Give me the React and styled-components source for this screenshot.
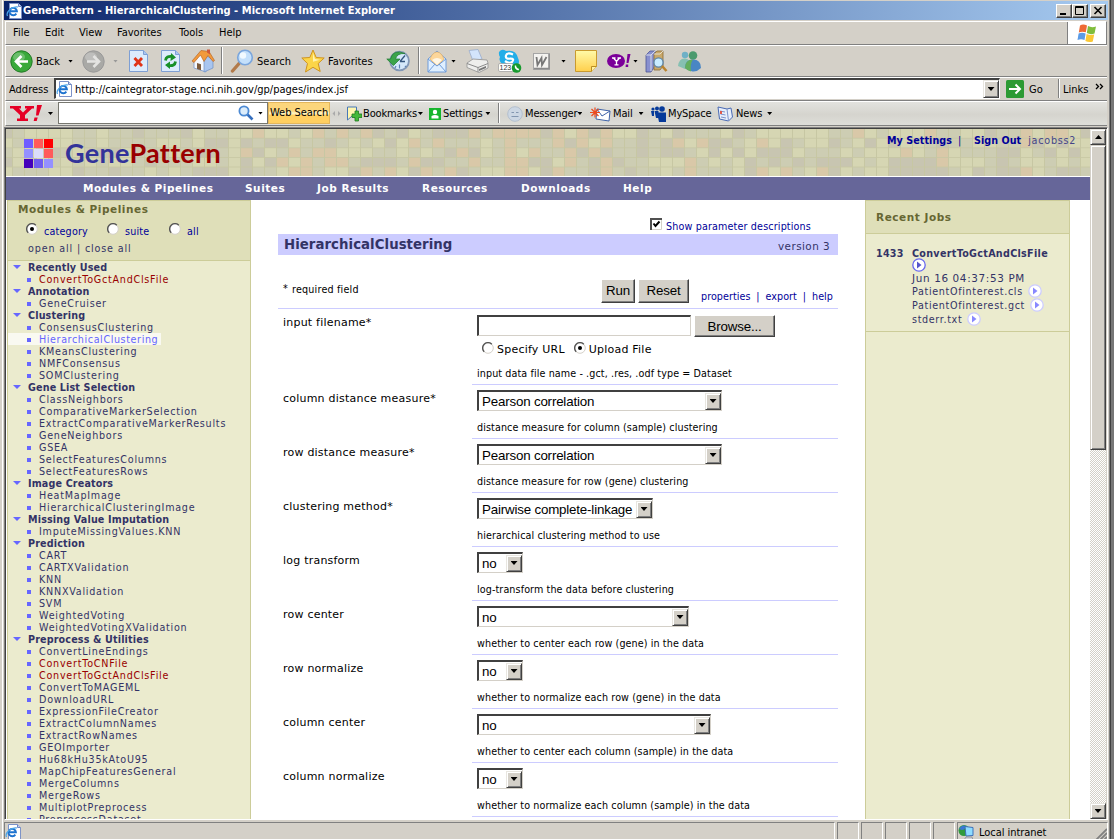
import React from "react";
import styled, { createGlobalStyle } from "styled-components";

const VERDANA = '"DejaVu Sans", Verdana, sans-serif';
const TAHOMA = '"DejaVu Sans Condensed", "DejaVu Sans", Tahoma, sans-serif';
const FACE = "#d4d0c8";
const INK = "#333366";
const LINK = "#000099";

const Global = createGlobalStyle`
  * { box-sizing: border-box; }
  body { margin: 0; overflow: hidden; background: ${FACE}; }
`;

/* ---------- window frame ---------- */
const Window = styled.div`
  width: 1114px;
  height: 839px;
  display: flex;
  overflow: hidden;
  background: ${FACE};
  font-family: ${TAHOMA};
  font-stretch: condensed;
  font-size: 11px;
  color: #000;
  white-space: nowrap;
`;
const LeftFrame = styled.div`
  width: 4px;
  border-left: 2px solid ${FACE};
  background: linear-gradient(90deg, #fff 0 1px, ${FACE} 1px);
`;
const RightFrame = styled.div`
  width: 6px;
  background: linear-gradient(90deg, ${FACE} 0 1px, #808080 1px 2px, #404040 2px 3px, #777 3px);
`;
const Column = styled.div`
  width: 1104px;
  display: flex;
  flex-direction: column;
`;
const TitleBar = styled.div`
  height: 19px;
  margin-top: 1px;
  flex: none;
  display: flex;
  align-items: center;
  padding: 0 2px;
  background: linear-gradient(90deg, #0a246a, #a6caf0);
  color: #fff;
  font-weight: bold;
`;
const TitleText = styled.span`
  flex: 1;
  margin-left: 1px;
  letter-spacing: 0.05px;
`;
const CaptionButton = styled.div`
  width: 16px;
  height: 14px;
  margin-left: ${(p) => p.$gap || 0}px;
  background: ${FACE};
  border: 1px solid;
  border-color: #fff #404040 #404040 #fff;
  box-shadow: inset -1px -1px #808080;
  display: flex;
`;
const Band = styled.div`
  height: ${(p) => p.$h}px;
  flex: none;
  display: flex;
  align-items: stretch;
  border-top: 1px solid #fff;
  border-bottom: 1px solid #808080;
  border-left: 1px solid #fff;
  margin: 0 1px;
`;
const MenuBand = styled(Band)`
  margin-top: 1px;
  border-right: 1px solid #808080;
`;
const MenuItem = styled.span`
  width: ${(p) => p.$w}px;
  padding-top: 4px;
  padding-left: 7px;
`;
const Throbber = styled.div`
  width: 39px;
  margin-left: auto;
  background: #fff;
  border-left: 1px solid #808080;
  display: flex;
  align-items: center;
  justify-content: center;
`;
const Tool = styled.div`
  width: ${(p) => p.$w}px;
  flex: none;
  display: flex;
  align-items: center;
  padding-left: ${(p) => p.$pl || 0}px;
  gap: ${(p) => p.$gap ?? 4}px;
`;
const Divider = styled.div`
  width: 2px;
  flex: none;
  margin: 1px ${(p) => p.$r || 7}px 2px 0;
  border-left: 1px solid #808080;
  border-right: 1px solid #fff;
`;
const Caret = styled.i`
  width: 5px;
  height: 3px;
  flex: none;
  margin-left: ${(p) => p.$ml || 0}px;
  background: ${(p) => p.$c || "#000"};
  clip-path: polygon(0 0, 100% 0, 50% 100%);
`;
const AddressLabel = styled.span`
  width: 48px;
  padding: 5px 0 0 3px;
`;
const AddressField = styled.div`
  width: 946px;
  height: 21px;
  display: flex;
  align-items: center;
  background: #fff;
  border: 1px solid #404040;
  border-width: 2px 1px 1px 2px;
  border-color: #404040 #fff #fff #404040;
`;
const Url = styled.span`
  flex: 1;
  margin-left: 3px;
  letter-spacing: 0;
`;
const DropButton = styled.div`
  width: 16px;
  height: ${(p) => p.$h || 17}px;
  flex: none;
  background: ${FACE};
  border: 1px solid;
  border-color: #e8e6e0 #404040 #404040 #e8e6e0;
  box-shadow: inset 1px 1px #fff, inset -1px -1px #808080;
  display: flex;
  align-items: center;
  justify-content: center;
  &::after {
    content: "";
    width: 7px;
    height: 4px;
    background: #000;
    clip-path: polygon(0 0, 100% 0, 50% 100%);
    transform: rotate(${(p) => (p.$up ? 180 : 0)}deg);
  }
`;
const YahooBand = styled(Band)`
  background: linear-gradient(#e2e2de, #d5d4ce 55%, #deded9);
  letter-spacing: -0.15px;
`;
const YahooInput = styled.div`
  width: 210px;
  height: 22px;
  flex: none;
  display: flex;
  align-items: center;
  justify-content: flex-end;
  gap: 4px;
  padding-right: 4px;
  background: #fff;
  border: 1px solid #77776f;
`;
const WebSearch = styled.div`
  width: 62px;
  height: 22px;
  flex: none;
  padding: 3px 0 0 1px;
  margin-right: 2px;
  letter-spacing: -0.05px;
  background: linear-gradient(#fcd67c 0 40%, #fff0b8 48% 54%, #ffcf60 62%);
  border: 1px solid #e3b65c;
`;

/* ---------- document viewport ---------- */
const Viewport = styled.div`
  height: 693px;
  flex: none;
  display: flex;
  border: 1px solid;
  border-color: #808080 #fff #fff #808080;
  box-shadow: inset 1px 1px #404040;
  padding: 1px 0 0 1px;
  margin-top: 1px;
  font-family: ${VERDANA};
  font-stretch: normal;
  font-size: 9.6px;
  color: ${INK};
`;
const Page = styled.div`
  width: 1084px;
  flex: none;
  background: #fff;
  display: flex;
  flex-direction: column;
  overflow: hidden;
`;
const Banner = styled.header`
  height: 47px;
  flex: none;
  display: grid;
  background: #cdcdb0;
  > * { grid-area: 1 / 1; }
`;
const BannerContent = styled.div`
  display: flex;
  padding-left: 18px;
  position: relative;
`;
const Brand = styled.div`
  margin: 6px 0 0 12px;
  font: 700 27px/36px Lato, sans-serif;
  color: #333399;
  letter-spacing: 0.3px;
  flex: 1;
  span { color: #990000; }
`;
const UserLinks = styled.div`
  width: 203px;
  padding-top: 6px;
  display: flex;
  color: ${LINK};
  b { letter-spacing: 0.05px; }
`;
const Pipe = styled.span`
  width: 22px;
  padding-left: 6px;
`;
const UserName = styled.span`
  margin-left: 7px;
  letter-spacing: 0.75px;
  color: #444488;
`;
const Nav = styled.nav`
  height: 24px;
  flex: none;
  border-top: 1px solid #fff;
  background: #666699;
  display: flex;
  padding: 5px 0 0 77px;
  font-size: 10.5px;
  font-weight: bold;
  letter-spacing: 0.55px;
  color: #fff;
`;
const NavItem = styled.span`
  width: ${(p) => p.$w}px;
`;
const Body = styled.div`
  flex: 1;
  min-height: 0;
  display: flex;
  padding-left: 1px;
`;
const Panel = styled.aside`
  width: ${(p) => p.$w}px;
  flex: none;
  background: #ebebce;
  border: 1px solid #cccc99;
  border-bottom: 0;
  overflow: hidden;
`;
const PanelHead = styled.div`
  height: ${(p) => p.$h}px;
  padding: ${(p) => p.$pad};
  background: #dfdfb9;
  border-bottom: 1px solid #cccc99;
`;
const PanelTitle = styled.div`
  font-size: 10.5px;
  line-height: 14px;
  font-weight: bold;
  letter-spacing: 0.55px;
  color: #666633;
`;
const RadioRow = styled.div`
  display: flex;
  padding: 7px 0 0 8px;
  height: 27px;
`;
const RadioOption = styled.label`
  width: ${(p) => p.$w}px;
  display: flex;
  gap: 6px;
  color: ${LINK};
  letter-spacing: 0.2px;
  span { padding-top: 3px; }
`;
const OpenClose = styled.div`
  padding-left: 10px;
  letter-spacing: 0.85px;
  line-height: 12px;
`;
const Category = styled.div`
  height: 12px;
  line-height: 13px;
  font-weight: bold;
  letter-spacing: 0.15px;
  display: flex;
  align-items: center;
  padding-left: 5px;
  gap: 7px;
  &::before {
    content: "";
    width: 8px;
    height: 4px;
    background: #6666ff;
    clip-path: polygon(0 0, 100% 0, 50% 100%);
  }
`;
const Module = styled.div`
  height: 12px;
  line-height: 13px;
  width: max-content;
  letter-spacing: ${(p) => (p.$state === "current" ? 0.6 : 0.75)}px;
  display: flex;
  align-items: center;
  padding: 0 3px 0 19px;
  gap: 8px;
  color: ${(p) => (p.$state === "red" ? "#990000" : p.$state === "current" ? "#6666ff" : INK)};
  background: ${(p) => (p.$state === "current" ? "#f9f9f1" : "none")};
  &::before {
    content: "";
    width: 4px;
    height: 4px;
    margin-top: 2px;
    background: #6666ff;
  }
`;
const Main = styled.main`
  width: 614px;
  flex: none;
  padding: 17px 27px 0;
  color: #000;
`;
const ShowDescriptions = styled.div`
  height: 17px;
  display: flex;
  justify-content: flex-end;
  gap: 4px;
  padding: 1px 27px 0 0;
  color: ${LINK};
  letter-spacing: 0.15px;
  span { padding-top: 3px; }
`;
const TaskTitle = styled.div`
  height: 21px;
  display: flex;
  align-items: center;
  justify-content: space-between;
  padding: 0 8px 0 6px;
  background: #ccccff;
  color: ${INK};
`;
const TaskName = styled.h1`
  margin: 0;
  font-size: 13.3px;
  font-weight: bold;
  letter-spacing: 0.05px;
`;
const Version = styled.span`
  font-size: 10.4px;
  letter-spacing: 0.45px;
  padding-top: 3px;
`;
const Actions = styled.div`
  height: 54px;
  display: flex;
  align-items: center;
  padding: 18px 5px 0 5px;
  border-bottom: 1px solid #ccccff;
`;
const Required = styled.span`
  width: 318px;
  margin-top: -3px;
  display: flex;
  gap: 4px;
  letter-spacing: 0.2px;
  span { padding-top: 1px; }
`;
const Button = styled.button`
  width: ${(p) => p.$w}px;
  height: ${(p) => p.$h}px;
  flex: none;
  padding: 0;
  margin-right: 3px;
  font: 13.33px "Liberation Sans", Arial, sans-serif;
  letter-spacing: -0.15px;
  background: ${FACE};
  border: 1px solid;
  border-color: #fff #404040 #404040 #fff;
  box-shadow: inset -1px -1px #808080;
  color: #000;
`;
const ActionLinks = styled.div`
  flex: 1;
  display: flex;
  justify-content: space-between;
  padding: 11px 0 0 9px;
  color: ${LINK};
  letter-spacing: 0.05px;
`;
const Row = styled.div`
  height: ${(p) => p.$h || 54}px;
  display: flex;
`;
const Label = styled.label`
  width: 194px;
  padding: 7px 0 0 5px;
  font-size: 11px;
  letter-spacing: 0.22px;
`;
const Control = styled.div`
  width: 366px;
  display: flex;
  flex-direction: column;
  justify-content: space-between;
  align-items: flex-start;
  padding: ${(p) => (p.$first ? 6 : 5)}px 0 4px 5px;
  border-bottom: 1px solid #ccccff;
`;
const Description = styled.span`
  letter-spacing: 0.1px;
  line-height: 12px;
`;
const SelectBox = styled.div`
  width: ${(p) => p.$w}px;
  height: 21px;
  display: flex;
  align-items: center;
  background: #fff;
  border: 2px solid;
  border-width: 2px 1px 1px 2px;
  border-color: #404040 ${FACE} ${FACE} #404040;
  font: 13.33px "Liberation Sans", Arial, sans-serif;
  padding: 0 0 0 3px;
  span { flex: 1; letter-spacing: -0.18px; padding-top: 1px; }
`;
const FileRow = styled.div`
  display: flex;
  gap: 3px;
`;
const FileInput = styled.div`
  width: 214px;
  height: 21px;
  border: 2px solid;
  border-width: 2px 1px 1px 2px;
  border-color: #404040 ${FACE} ${FACE} #404040;
`;
const SourceRow = styled.div`
  display: flex;
  padding-left: 5px;
  margin-bottom: 7px;
  gap: 9px;
  font-size: 11px;
  letter-spacing: 0.22px;
  label { display: flex; gap: 3px; }
  span { padding-top: 1px; }
`;
const Job = styled.div`
  height: 98px;
  padding: 14px 0 0 10px;
  display: flex;
  border-bottom: 1px solid #cccc99;
`;
const JobId = styled.b`
  width: 36px;
  letter-spacing: 0.25px;
`;
const JobLine = styled.div`
  height: ${(p) => p.$h || 14}px;
  display: flex;
  align-items: center;
  gap: 5px;
  letter-spacing: ${(p) => p.$ls || 0.65}px;
  font-size: ${(p) => p.$size || 9.6}px;
  font-weight: ${(p) => (p.$bold ? "bold" : "normal")};
`;
const ScrollBar = styled.div`
  width: 16px;
  flex: none;
  display: flex;
  flex-direction: column;
  justify-content: space-between;
  background: repeating-conic-gradient(#fff 0 25%, ${FACE} 0 50%) 0 0 / 2px 2px;
`;
const Thumb = styled.div`
  height: 305px;
  background: ${FACE};
  border: 1px solid;
  border-color: ${FACE} #404040 #404040 ${FACE};
  box-shadow: inset 1px 1px #fff, inset -1px -1px #808080;
`;
const StatusBar = styled.footer`
  flex: 1;
  margin-top: 2px;
  display: flex;
  gap: 2px;
`;
const StatusCell = styled.div`
  width: ${(p) => p.$w}px;
  flex: none;
  border: 1px solid;
  border-color: #808080 #fff transparent #808080;
  display: flex;
  align-items: center;
  gap: 5px;
  padding-top: 1px;
  letter-spacing: -0.05px;
`;
const Spacer = styled.div`
  flex: 1;
`;

/* ---------- drawings ---------- */
const Drawing = styled.svg`
  flex: none;
`;
const Svg = ({ w, h, vb, children }) => (
  <Drawing width={w} height={h} viewBox={vb || `0 0 ${w} ${h}`}>
    {children}
  </Drawing>
);
const IEPage = () => (
  <Svg w={16} h={16}>
    <path d="M3.500.5h9l3 3v12h-12z" fill="#fff" stroke="#7d93c8" />
    <path d="M12.500.5v3h3" fill="#c6d4f2" stroke="#6d86c4" />
    <path d="M10.300 10.600a3.700 3.700 0 1 1 .6-2.400H4.200" fill="none" stroke="#1e73cf" strokeWidth="1.900" />
    <path d="M1.500 13C-.5 9 6 3 12 4" fill="none" stroke="#49a4e8" strokeWidth="1.200" />
  </Svg>
);
const Flag = () => (
  <Svg w={20} h={19}>
    <path d="M3 1.500q3-2 7 0L8.800 8.300Q5 7 1.800 8.500z" fill="#ee6a34" />
    <path d="M11 2q3.500 2 8 .5L17.500 9.500Q13.500 11 9.800 9z" fill="#80bd3c" />
    <path d="M1.600 9.500q3.400-1.700 7 0L7.500 16Q4 14.500.5 16z" fill="#5b9be6" />
    <path d="M9.600 10q4 1.500 7.600.5L15.800 17.500Q12 18.800 8.400 17z" fill="#fbc834" />
  </Svg>
);
const RoundArrow = ({ gray }) => (
  <Svg w={23} h={23}>
    <circle cx="11.500" cy="11.500" r="10.700" fill={gray ? "#a9a9a6" : "#39a93a"} stroke={gray ? "#999" : "#247a27"} />
    <ellipse cx="9" cy="7" rx="6" ry="4.500" fill="#fff" opacity=".25" />
    <path
      d={gray ? "M5 11.500h12M11.500 6l5.500 5.500-5.500 5.500" : "M18 11.500H6M11.500 6L6 11.500l5.500 5.500"}
      fill="none"
      stroke={gray ? "#e4e4e2" : "#fff"}
      strokeWidth="2.600"
    />
  </Svg>
);
const Sheet = ({ children }) => (
  <Svg w={19} h={22}>
    <path d="M.5.5h14l4 4v17H.5z" fill="#dcebfc" stroke="#7e9fd4" />
    <path d="M14.500.5v4h4" fill="#a9c6f1" stroke="#7e9fd4" />
    {children}
  </Svg>
);
const Stop = () => (
  <Sheet><path d="M5.500 8l7.500 8M13 8l-7.500 8" stroke="#e03418" strokeWidth="2.800" /></Sheet>
);
const Refresh = () => (
  <Sheet>
    <path d="M4.500 10.500q.5-5 7-4M14.500 11.500q-.5 5-7 4" fill="none" stroke="#189028" strokeWidth="2.800" />
    <path d="M10 3l5 4.500-5.500 3.500zM9 11.500L4 15l5 4z" fill="#189028" />
  </Sheet>
);
const Home = () => (
  <Svg w={24} h={24}>
    <path d="M3 12l7-9 5 8v12l-12-4z" fill="#f6f8fd" stroke="#8fa6cf" />
    <path d="M13 11l3-4 6 4v8l-9 4z" fill="#a9c5ef" stroke="#6f8fc4" strokeWidth=".7" />
    <path d="M1 12L10 1.500l8 1 5.500 9-1.500 1-5-6-4 6-3.500-6.500L3 13.500z" fill="#f29a3c" stroke="#b9682a" strokeWidth=".7" />
    <path d="M16 .5h3v5l-3-2z" fill="#cf5a3a" />
    <path d="M6 14l4 1.200v6L6 20z" fill="#7d5b3c" />
  </Svg>
);
const Lens = () => (
  <Svg w={24} h={24}>
    <path d="M2.500 22l7-8" stroke="#b27a4a" strokeWidth="3.400" strokeLinecap="round" />
    <circle cx="15" cy="8.500" r="7.300" fill="#c4e0fb" stroke="#7ba6dc" strokeWidth="1.600" />
    <circle cx="13" cy="6.500" r="3.200" fill="#f2faff" />
  </Svg>
);
const BlueLens = () => (
  <Svg w={16} h={16}>
    <path d="M9.500 9.500l5 5" stroke="#356fbe" strokeWidth="2.600" />
    <circle cx="6" cy="6" r="4.600" fill="#dcedfb" stroke="#4c8ad4" strokeWidth="1.800" />
  </Svg>
);
const Star = () => (
  <Svg w={24} h={24}>
    <path d="M12 1l3.200 7.500 8 .5-6 5.500 2 8L12 18.300 4.500 23l2-8.500L.8 9l8-.5z" fill="#fcd548" stroke="#cf9420" />
    <path d="M12 4l2 6 5 .8-7 2z" fill="#fff3b0" />
  </Svg>
);
const History = () => (
  <Svg w={24} h={24}>
    <circle cx="13.500" cy="12" r="9.400" fill="#d5e8fa" stroke="#8297b5" strokeWidth="1.800" />
    <path d="M14 12.500l5-6M14 12.500h5" stroke="#34557e" strokeWidth="1.300" />
    <path d="M13.500 15.500v4M10 17l-1 2M19 17l1 1" stroke="#5f83b5" strokeWidth="1.200" />
    <path d="M19 4.500Q7-.5 4.500 10H.8l6.700 6.500L14 10h-4.500Q11 4 19 4.500z" fill="#3ca44a" stroke="#1e7a2e" strokeWidth=".7" />
  </Svg>
);
const MailOpen = () => (
  <Svg w={20} h={23}>
    <path d="M1 9l9-8 9 8v13H1z" fill="#dfefff" stroke="#6f9cdb" />
    <path d="M3 9l2-4q5-6 10 0l2 4-7 7z" fill="#fcd69a" stroke="#e6ab55" strokeWidth=".6" />
    <path d="M5 10q5-4 10 0l-5 5z" fill="#fff6e4" />
    <path d="M1 9l9 7 9-7M1 22l7-8M19 22l-7-8" fill="none" stroke="#6f9cdb" />
  </Svg>
);
const Printer = () => (
  <Svg w={23} h={24}>
    <path d="M3 1.500l9-1L16 10 7 12z" fill="#d3e4fb" stroke="#9aaccb" strokeWidth=".8" />
    <path d="M1 14l6-4 14 1 1 3v5l-9 4.500-12-5z" fill="#eeeeec" stroke="#999" strokeWidth=".9" />
    <path d="M1 14.500l11 4 10-4M12 18v5" fill="none" stroke="#8b8b8b" />
    <path d="M13 20l7-3v2l-7 3z" fill="#777" />
  </Svg>
);
const Skype = () => (
  <Svg w={24} h={24}>
    <path d="M1 3q3-4 7-1 10-2 12 7 3 6-3 9-6 2-12-2Q0 12 2 8 .5 6 1 3z" fill="#22aee8" />
    <path d="M15 5.500Q9 3 8 6.500t4 3.200 2 3.300q-3 2-7-1" fill="none" stroke="#fff" strokeWidth="2.200" />
    <rect x=".5" y="14.500" width="15" height="8" rx="1.500" fill="#fff" stroke="#999" strokeWidth=".7" />
    <text x="1.500" y="21.300" fontSize="7" fontFamily="Liberation Sans" fill="#333">123</text>
    <circle cx="18.500" cy="19" r="4.800" fill="#179a2e" />
    <path d="M16.800 16.500q-.5 4 3.600 5l.8-1.600-1.600-.6-1.200-1.200-.3-1.500z" fill="#fff" />
  </Svg>
);
const Word = () => (
  <Svg w={17} h={17}>
    <rect x=".5" y=".5" width="16" height="16" fill="#f4f3f0" stroke="#a5a5a5" />
    <path d="M1 15.500h15V1" fill="none" stroke="#8b8b8b" strokeWidth="1.500" />
    <path d="M3.500 4l1 8 4-7 .5 7 4.500-8" fill="none" stroke="#777" strokeWidth="1.800" />
  </Svg>
);
const Note = () => (
  <Svg w={22} h={22}>
    <defs><linearGradient id="note" x2="0" y2="1"><stop stopColor="#fffaa8" /><stop offset="1" stopColor="#ffcf4c" /></linearGradient></defs>
    <path d="M.5.500h21v16l-5 5H.5z" fill="url(#note)" stroke="#c99a2e" />
    <path d="M16.500 21.500v-5h5" fill="#fff2a2" stroke="#b98d22" />
  </Svg>
);
const YahooOval = () => (
  <Svg w={24} h={16}>
    <ellipse cx="9" cy="8" rx="9" ry="7" fill="#7b0099" />
    <path d="M5 5h3.500M10.500 5H14M6.500 5l3 3.500L12.500 5M9.500 8v4M7.500 11.800h4" fill="none" stroke="#fff" strokeWidth="1.300" />
    <path d="M20.500 1h3l-2 9h-2zM18.800 11.500h2.400v2.500h-2.600z" fill="#7b0099" />
  </Svg>
);
const Books = () => (
  <Svg w={23} h={23}>
    <path d="M1 5l4-4h5v15l-4 6H1z" fill="#8890cf" stroke="#4d5696" strokeWidth=".8" />
    <path d="M9 4l3-3h6v15l-3 4H9z" fill="#c9a86a" stroke="#8a6b33" strokeWidth=".8" />
    <path d="M1 5h5v16M6 5l4-4M9 4h6l3-3" fill="none" stroke="#eee" strokeWidth=".8" />
    <circle cx="13.500" cy="12.500" r="4.600" fill="#c9ecff" stroke="#5f87aa" strokeWidth="1.400" />
    <path d="M17 16l4.500 5" stroke="#b9832e" strokeWidth="2.600" />
  </Svg>
);
const People = () => (
  <Svg w={25} h={22}>
    <circle cx="8" cy="5" r="3.200" fill="#6fb0c6" />
    <path d="M1 16q1-8 7-7.500 5 0 6 7.500l-6 3z" fill="#86c0b2" />
    <circle cx="16" cy="5.500" r="4.300" fill="#4b9a6e" />
    <path d="M8 18q0-8.500 8-8.500T24 18q-4 4-8.500 3.500T8 18z" fill="#4986c4" />
    <path d="M8 18q0-8.500 8-8.500-3 4-2 12-4-1-6-3.500z" fill="#63ae5d" />
  </Svg>
);
const GoIcon = () => (
  <Svg w={18} h={18}>
    <rect width="18" height="18" rx="1.500" fill="#2c9a33" />
    <path d="M3 9h11M9.500 4.500L14 9l-4.500 4.500" fill="none" stroke="#fff" strokeWidth="2" />
  </Svg>
);
const YahooLogo = () => (
  <Svg w={32} h={17}>
    <path d="M0 1h11v2.500H9l4 4 4-4h-2V1h9v2.500h-2L15 10v3.500h3V16H7v-2.500h3V10L3 3.500H0z" fill="#e60026" />
    <path d="M27 0h5l-3.500 10.500H26zM24.500 12.500h3.200L26.700 16h-3z" fill="#e60026" />
  </Svg>
);
const BookmarkIcon = () => (
  <Svg w={16} h={16}>
    <path d="M1.500 1h9v12l-4.500-3-4.500 4z" fill="#fff6b0" stroke="#4778b8" />
    <path d="M9 5h3.500v3H16v3.500h-3.500V15H9v-3.500H6V8h3z" fill="#43b83a" stroke="#1e7c1d" strokeWidth=".8" />
  </Svg>
);
const SettingsIcon = () => (
  <Svg w={12} h={12}>
    <rect width="12" height="12" fill="#16b52c" />
    <circle cx="6" cy="4" r="2.200" fill="#fff" />
    <path d="M2.500 10.500V8q3.500-2 7 0v2.500z" fill="#fff" />
  </Svg>
);
const Smiley = () => (
  <Svg w={16} h={16}>
    <circle cx="8" cy="8" r="7.300" fill="#ccd7e4" stroke="#b3bfce" />
    <path d="M4.500 6.500h2.500M9 6.500h2.500M4.500 10.500h7" stroke="#8296b0" strokeWidth="1.200" />
  </Svg>
);
const YMail = () => (
  <Svg w={21} h={16}>
    <path d="M7 3l13 2-1 10-13-2z" fill="#fff" stroke="#3f63a8" />
    <path d="M7 3l5 7 8-5" fill="none" stroke="#3f63a8" />
    <path d="M0 6.500h10M5 1.500v10M1.500 3l7 7M8.500 3l-7 7" stroke="#ee4a1e" strokeWidth="1.200" />
  </Svg>
);
const MySpaceIcon = () => (
  <Svg w={16} h={16}>
    <g fill="#063a9a">
      <circle cx="3" cy="3" r="1.600" /><circle cx="7" cy="2.500" r="2" /><circle cx="12" cy="3" r="2.800" />
      <path d="M1 5h3v5H2zM4.500 5h4v7H6zM7 6.500h9V16H9z" />
    </g>
  </Svg>
);
const NewsIcon = () => (
  <Svg w={16} h={16}>
    <path d="M1 1l9 2 4-1 1.500 9-4 4-9-2z" fill="#e8effb" stroke="#4a6ab4" />
    <path d="M10 3l1.500 12M3 5l5 1M3.500 8l5 1M4 11l5 1" fill="none" stroke="#7d94cc" />
    <path d="M3 5h2v3H3z" fill="#e05a4a" />
  </Svg>
);
const Globe = () => (
  <Svg w={16} h={15}>
    <circle cx="6" cy="5.500" r="5.500" fill="#2f9a3d" />
    <path d="M1 4q3-5 7-3-1 4-4 4z" fill="#3a77d4" />
    <path d="M7 1.500l8 1v8l-7 .5z" fill="#8fdcff" stroke="#3d70b8" />
    <path d="M8 12h6l1 3H6z" fill="#cfcfd8" stroke="#777" strokeWidth=".6" />
  </Svg>
);
const Play = ({ strong }) => (
  <Svg w={14} h={14}>
    <circle cx="7" cy="7" r="6.200" fill="#fff" stroke={strong ? "#6666ee" : "#ccccff"} strokeWidth="1.300" />
    <path d="M5 3.500L9.500 7 5 10.500z" fill={strong ? "#5555cc" : "#8888ff"} />
  </Svg>
);
const Radio = ({ on }) => (
  <Svg w={12} h={12}>
    <circle cx="6" cy="6" r="5.300" fill="#fff" stroke="#d4d0c8" />
    <path d="M2.200 9.800A5.300 5.300 0 0 1 9.800 2.200" fill="none" stroke="#555" strokeWidth="1.400" />
    {on && <circle cx="6" cy="6" r="2" fill="#000" />}
  </Svg>
);
const Check = () => (
  <Svg w={12} h={12}>
    <path d="M0 0h12v12H0z" fill="#fff" />
    <path d="M11.500 1v10.500H1" fill="none" stroke={FACE} />
    <path d="M12 1H1v11" fill="none" stroke="#505050" strokeWidth="2" />
    <path d="M3.500 5.500l2 2.500L9.500 3.500" fill="none" stroke="#000" strokeWidth="2" />
  </Svg>
);
const LogoSlot = styled.div`
  padding-top: 10px;
`;
const LogoGrid = () => {
  const colors = ["#6f5cff", "#ff5a5a", "#ff0000", "#9490ff", "#dcdcfa", "#ff5a5a", "#4400bb", "#6f5cee", "#9490ff"];
  return (
    <LogoSlot>
      <Svg w={29} h={29}>
        {colors.map((c, i) => (
          <rect key={i} x={(i % 3) * 10} y={Math.floor(i / 3) * 10} width="9" height="9" fill={c} />
        ))}
      </Svg>
    </LogoSlot>
  );
};
const Mosaic = () => {
  const cells = [];
  let seed = 7;
  const next = () => (seed = (seed * 16807) % 2147483647) / 2147483647;
  for (let c = 0; c < 91; c++) {
    for (let r = 0; r < 5; r++) {
      const n = next();
      const warm = c > 23 && c < 60 ? 0.27 : c < 12 ? 0 : 0.06;
      const fill = n < warm ? "#d9c8a8" : n < warm + 0.27 ? "#c8c5b1" : n < warm + 0.6 ? "#cdcdb3" : "#d6d6b3";
      cells.push(<rect key={`${c}-${r}`} x={c * 12 - 5} y={r * 9.600} width="11" height="8.800" fill={fill} />);
    }
  }
  return (
    <svg width="1084" height="47">
      <rect width="1084" height="47" fill="#c7c7a3" />
      {cells}
    </svg>
  );
};

/* ---------- data ---------- */
const categories = [
  ["Recently Used", ["!ConvertToGctAndClsFile"]],
  ["Annotation", ["GeneCruiser"]],
  ["Clustering", ["ConsensusClustering", "*HierarchicalClustering", "KMeansClustering", "NMFConsensus", "SOMClustering"]],
  ["Gene List Selection", ["ClassNeighbors", "ComparativeMarkerSelection", "ExtractComparativeMarkerResults", "GeneNeighbors", "GSEA", "SelectFeaturesColumns", "SelectFeaturesRows"]],
  ["Image Creators", ["HeatMapImage", "HierarchicalClusteringImage"]],
  ["Missing Value Imputation", ["ImputeMissingValues.KNN"]],
  ["Prediction", ["CART", "CARTXValidation", "KNN", "KNNXValidation", "SVM", "WeightedVoting", "WeightedVotingXValidation"]],
  ["Preprocess & Utilities", ["ConvertLineEndings", "!ConvertToCNFile", "!ConvertToGctAndClsFile", "ConvertToMAGEML", "DownloadURL", "ExpressionFileCreator", "ExtractColumnNames", "ExtractRowNames", "GEOImporter", "Hu68kHu35kAtoU95", "MapChipFeaturesGeneral", "MergeColumns", "MergeRows", "MultiplotPreprocess", "PreprocessDataset"]],
];
const fields = [
  ["column distance measure*", "Pearson correlation", 245, "distance measure for column (sample) clustering"],
  ["row distance measure*", "Pearson correlation", 245, "distance measure for row (gene) clustering"],
  ["clustering method*", "Pairwise complete-linkage", 176, "hierarchical clustering method to use"],
  ["log transform", "no", 46, "log-transform the data before clustering"],
  ["row center", "no", 212, "whether to center each row (gene) in the data"],
  ["row normalize", "no", 46, "whether to normalize each row (gene) in the data"],
  ["column center", "no", 234, "whether to center each column (sample) in the data"],
  ["column normalize", "no", 46, "whether to normalize each column (sample) in the data"],
];
const menus = [["File", 32], ["Edit", 34], ["View", 38], ["Favorites", 62], ["Tools", 40], ["Help", 40]];
const navItems = [["Modules & Pipelines", 162], ["Suites", 72], ["Job Results", 105], ["Resources", 99], ["Downloads", 102], ["Help", 60]];
const stateOf = (m) => (m[0] === "!" ? "red" : m[0] === "*" ? "current" : "normal");

const BrowserChrome = () => (
  <>
    <TitleBar>
      <IEPage />
      <TitleText>GenePattern - HierarchicalClustering - Microsoft Internet Explorer</TitleText>
      <CaptionButton><Svg w={14} h={12}><path d="M3 9h6" stroke="#000" strokeWidth="2" /></Svg></CaptionButton>
      <CaptionButton><Svg w={14} h={12}><path d="M2.500 1.500h8v8h-8zM2 2.500h9" fill="none" stroke="#000" /></Svg></CaptionButton>
      <CaptionButton $gap={2}><Svg w={14} h={12}><path d="M3.500 2l7 7M10.500 2l-7 7" stroke="#000" strokeWidth="1.600" /></Svg></CaptionButton>
    </TitleBar>
    <MenuBand $h={24}>
      {menus.map(([t, w]) => <MenuItem key={t} $w={w}>{t}</MenuItem>)}
      <Throbber><Flag /></Throbber>
    </MenuBand>
    <Band $h={32}>
      <Tool $w={76} $pl={4} $gap={3}><RoundArrow />Back<Caret $ml={5} /></Tool>
      <Tool $w={47}><RoundArrow gray /><Caret $ml={4} $c="#999" /></Tool>
      <Tool $w={32}><Stop /></Tool>
      <Tool $w={30}><Refresh /></Tool>
      <Tool $w={30}><Home /></Tool>
      <Divider />
      <Tool $w={71} $gap={3}><Lens />Search</Tool>
      <Tool $w={85} $gap={3}><Star />Favorites</Tool>
      <Tool $w={32}><History /></Tool>
      <Divider />
      <Tool $w={39}><MailOpen /><Caret /></Tool>
      <Tool $w={32}><Printer /></Tool>
      <Tool $w={35}><Skype /></Tool>
      <Tool $w={42} $gap={11}><Word /><Caret /></Tool>
      <Tool $w={32}><Note /></Tool>
      <Tool $w={38} $gap={2}><YahooOval /><Caret /></Tool>
      <Tool $w={32}><Books /></Tool>
      <Tool $w={30}><People /></Tool>
    </Band>
    <Band $h={24}>
      <AddressLabel>Address</AddressLabel>
      <AddressField>
        <IEPage />
        <Url>http://caintegrator-stage.nci.nih.gov/gp/pages/index.jsf</Url>
        <DropButton $h={18} />
      </AddressField>
      <Tool $w={58} $pl={6} $gap={5}><GoIcon />Go</Tool>
      <Divider $r={3} />
      <Tool $w={40} $gap={7}>Links<Svg w={9} h={12}><path d="M1 1l2.500 2.500L1 6M5 1l2.500 2.500L5 6" fill="none" stroke="#000" strokeWidth="1.300" /></Svg></Tool>
    </Band>
    <YahooBand $h={25}>
      <Tool $w={52} $pl={4} $gap={6}><YahooLogo /><Caret $ml={0} /></Tool>
      <YahooInput><BlueLens /><Caret /></YahooInput>
      <WebSearch>Web Search</WebSearch>
      <Tool $w={14}><Svg w={9} h={7}><path d="M3 1L.5 3.500 3 6zM6 1l2.500 2.500L6 6z" fill="#aaa" /></Svg></Tool>
      <Tool $w={83} $gap={1}><BookmarkIcon />Bookmarks<Caret /></Tool>
      <Tool $w={69} $gap={2}><SettingsIcon />Settings<Caret $ml={1} /></Tool>
      <Divider />
      <Tool $w={83} $gap={2}><Smiley />Messenger<Caret $ml={-2} /></Tool>
      <Tool $w={60} $gap={2}><YMail />Mail<Caret $ml={4} /></Tool>
      <Tool $w={67} $gap={2}><MySpaceIcon />MySpace</Tool>
      <Tool $w={60} $gap={3}><NewsIcon />News<Caret $ml={2} /></Tool>
    </YahooBand>
  </>
);

const Sidebar = () => (
  <Panel $w={244}>
    <PanelHead $h={60} $pad="1px 0 0 10px">
      <PanelTitle>Modules &amp; Pipelines</PanelTitle>
      <RadioRow>
        <RadioOption $w={81}><Radio on /><span>category</span></RadioOption>
        <RadioOption $w={62}><Radio /><span>suite</span></RadioOption>
        <RadioOption $w={40}><Radio /><span>all</span></RadioOption>
      </RadioRow>
      <OpenClose>open all | close all</OpenClose>
    </PanelHead>
    {categories.map(([name, mods]) => (
      <React.Fragment key={name}>
        <Category>{name}</Category>
        {mods.map((m) => <Module key={m} $state={stateOf(m)}>{m.replace(/^[!*]/, "")}</Module>)}
      </React.Fragment>
    ))}
  </Panel>
);

const TaskForm = () => (
  <Main>
    <ShowDescriptions><Check /><span>Show parameter descriptions</span></ShowDescriptions>
    <TaskTitle><TaskName>HierarchicalClustering</TaskName><Version>version 3</Version></TaskTitle>
    <Actions>
      <Required>*<span>required field</span></Required>
      <Button $w={34} $h={24}>Run</Button>
      <Button $w={51} $h={24}>Reset</Button>
      <ActionLinks><span>properties</span><span>|</span><span>export</span><span>|</span><span>help</span></ActionLinks>
    </Actions>
    <Row $h={76}>
      <Label>input filename*</Label>
      <Control $first>
        <FileRow><FileInput /><Button $w={81} $h={22}>Browse...</Button></FileRow>
        <SourceRow>
          <label><Radio /><span>Specify URL</span></label>
          <label><Radio on /><span>Upload File</span></label>
        </SourceRow>
        <Description>input data file name - .gct, .res, .odf type = Dataset</Description>
      </Control>
    </Row>
    {fields.map(([label, value, w, desc]) => (
      <Row key={label}>
        <Label>{label}</Label>
        <Control>
          <SelectBox $w={w}><span>{value}</span><DropButton /></SelectBox>
          <Description>{desc}</Description>
        </Control>
      </Row>
    ))}
  </Main>
);

const RecentJobs = () => (
  <Panel $w={205}>
    <PanelHead $h={33} $pad="9px 0 0 10px"><PanelTitle>Recent Jobs</PanelTitle></PanelHead>
    <Job>
      <JobId>1433</JobId>
      <div>
        <JobLine $h={10} $bold $ls={0.3}>ConvertToGctAndClsFile</JobLine>
        <JobLine><Play strong /></JobLine>
        <JobLine $h={12} $size={10.4} $ls={0.65}>Jun 16 04:37:53 PM</JobLine>
        <JobLine>PatientOfinterest.cls<Play /></JobLine>
        <JobLine>PatientOfinterest.gct<Play /></JobLine>
        <JobLine>stderr.txt<Play /></JobLine>
      </div>
    </Job>
  </Panel>
);

export default function App() {
  return (
    <Window>
      <Global />
      <LeftFrame />
      <Column>
        <BrowserChrome />
        <Viewport>
          <Page>
            <Banner>
              <Mosaic />
              <BannerContent>
                <LogoGrid />
                <Brand>Gene<span>Pattern</span></Brand>
                <UserLinks>
                  <b>My Settings</b><Pipe>|</Pipe><b>Sign Out</b>
                  <UserName>jacobss2</UserName>
                </UserLinks>
              </BannerContent>
            </Banner>
            <Nav>{navItems.map(([t, w]) => <NavItem key={t} $w={w}>{t}</NavItem>)}</Nav>
            <Body>
              <Sidebar />
              <TaskForm />
              <RecentJobs />
            </Body>
          </Page>
          <ScrollBar>
            <div><DropButton $up $h={16} /><Thumb /></div>
            <DropButton $h={16} />
          </ScrollBar>
        </Viewport>
        <StatusBar>
          <StatusCell $w={831}><IEPage /></StatusCell>
          {[0, 1, 2, 3, 4].map((i) => <StatusCell key={i} $w={22} />)}
          <StatusCell $w={151}>
            <Globe />Local intranet<Spacer />
            <Svg w={12} h={16}><path d="M1 16L12 5M5 16l7-7M9 16l3-3" stroke="#808080" strokeWidth="1.800" /></Svg>
          </StatusCell>
        </StatusBar>
      </Column>
      <RightFrame />
    </Window>
  );
}
